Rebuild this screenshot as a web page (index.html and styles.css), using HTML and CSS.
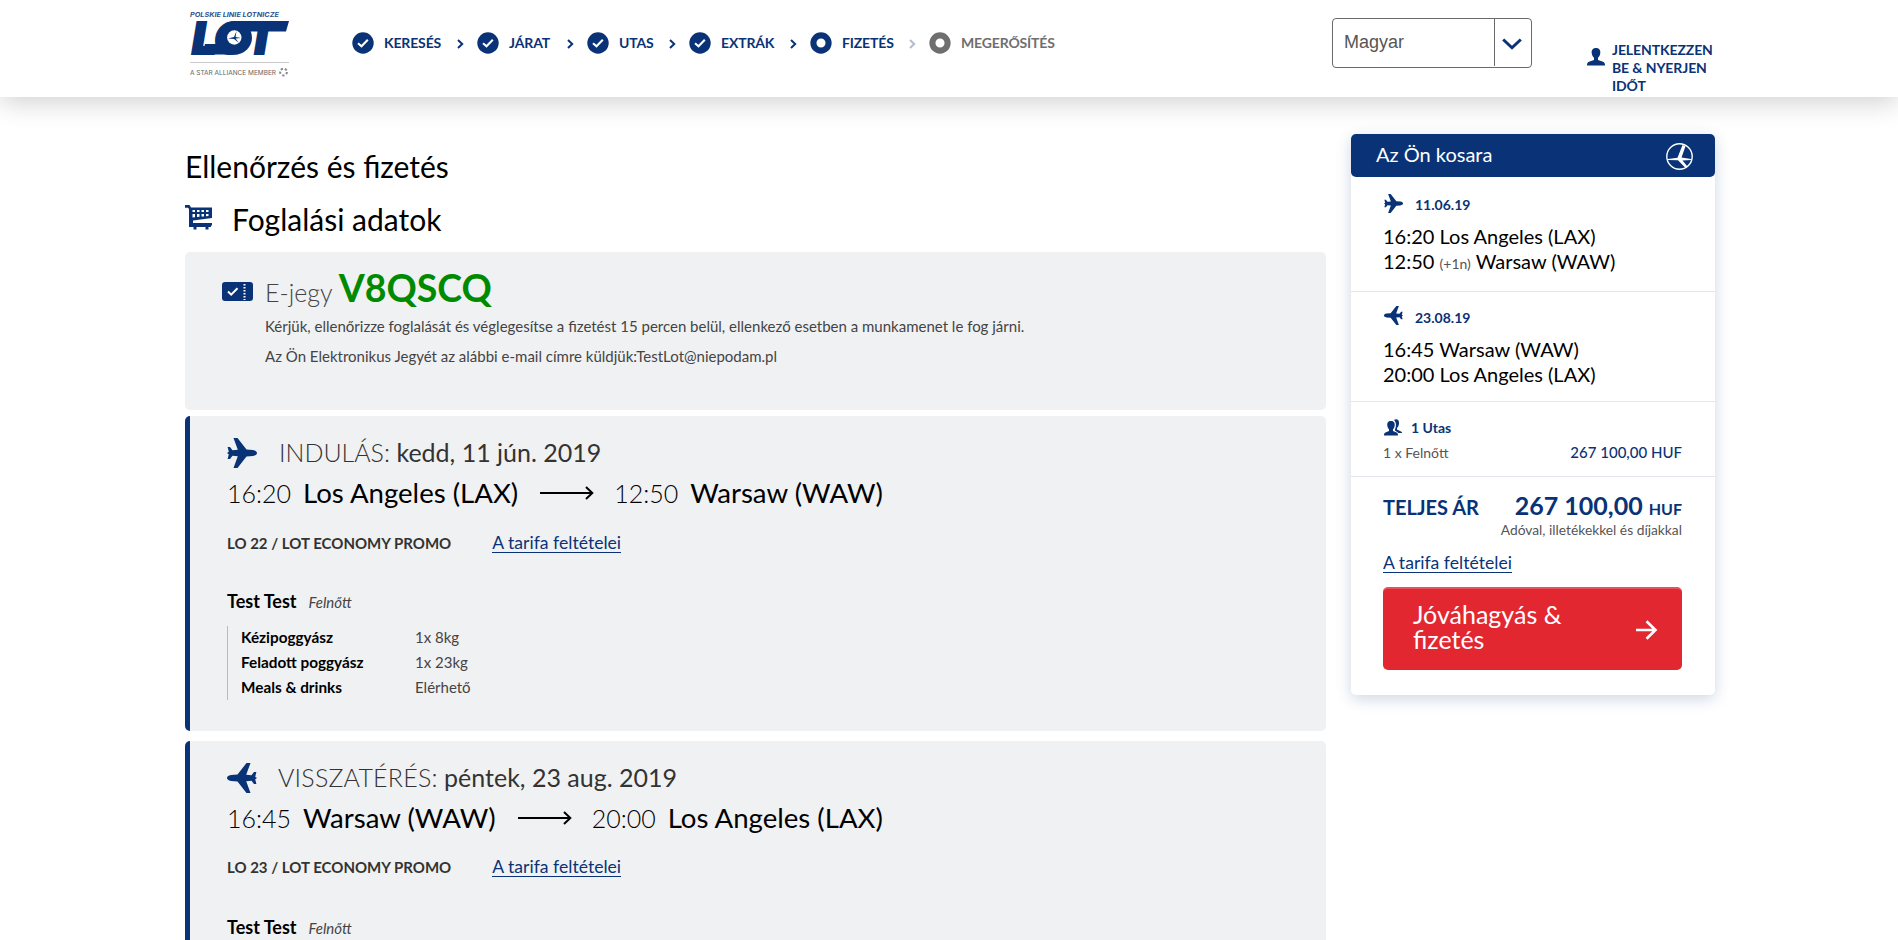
FILE: index.html
```html
<!DOCTYPE html>
<html lang="hu">
<head>
<meta charset="utf-8">
<title>LOT</title>
<link rel="stylesheet" href="styles.css">
</head>
<body>
<svg class="defs" width="0" height="0">
  <symbol id="plane" viewBox="0 0 30 30"><path d="M6.500 0H10.500L19.500 11.500L26 12C28.500 12.400 30 13.600 30 15C30 16.400 28.500 17.600 26 18L19.500 18.500L10.500 30H6.500L10.800 18.300L5.500 17.800L3 21H0.600L1.800 16.200L0 15L1.800 13.800L0.600 9H3L5.500 12.200L10.800 11.700Z"/></symbol>
  <symbol id="check" viewBox="0 0 22 22"><circle cx="11" cy="11" r="10.700"/><path d="M6 11.200L9.500 14.200L15.800 7.800" fill="none" stroke="#fff" stroke-width="2.100"/></symbol>
  <symbol id="ring" viewBox="0 0 22 22"><circle cx="11" cy="11" r="7.600" fill="none" stroke="currentColor" stroke-width="6.100"/></symbol>
  <symbol id="next" viewBox="0 0 7 10"><path d="M1 1L5.200 5L1 9" fill="none" stroke="currentColor" stroke-width="2"/></symbol>
  <symbol id="long" viewBox="0 0 54 14"><path d="M0 7H52M46 1L52.300 7L46 13" fill="none" stroke="#000" stroke-width="2"/></symbol>
</svg>
<header class="top">
  <a class="logo">
    <svg width="110" height="80" viewBox="183 0 110 80">
      <text x="190" y="17" class="logo-small" textLength="89" lengthAdjust="spacingAndGlyphs">POLSKIE LINIE LOTNICZE</text>
      <text y="53.500" x="192 214 246" class="logo-big">LOT</text>
      <path d="M236 21H289L286 31.500H240ZM205 44H226L238 54.400H202Z"/>
      <ellipse cx="235" cy="37.700" rx="17" ry="16.700"/>
      <circle cx="234.300" cy="37.500" r="7.200" class="white"/>
      <path d="M236.500 31L234 37L228 38.500L234 39L239 43L235.600 38.400L241 38L235.600 37Z"/>
      <path d="M190 62.500H289" stroke="#c9c9c9"/>
      <text x="190" y="74.500" class="logo-member" textLength="86" lengthAdjust="spacingAndGlyphs">A STAR ALLIANCE MEMBER</text>
      <circle cx="283.500" cy="72" r="3.400" class="star"/>
    </svg>
  </a>
  <nav class="steps">
    <span class="step"><svg class="dot"><use href="#check"/></svg><b class="w1">KERESÉS</b><svg class="next"><use href="#next"/></svg></span>
    <span class="step"><svg class="dot"><use href="#check"/></svg><b class="w2">JÁRAT</b><svg class="next"><use href="#next"/></svg></span>
    <span class="step"><svg class="dot"><use href="#check"/></svg><b class="w3">UTAS</b><svg class="next"><use href="#next"/></svg></span>
    <span class="step"><svg class="dot"><use href="#check"/></svg><b class="w4">EXTRÁK</b><svg class="next"><use href="#next"/></svg></span>
    <span class="step"><svg class="dot"><use href="#ring"/></svg><b class="w5">FIZETÉS</b><svg class="next faded"><use href="#next"/></svg></span>
    <span class="step idle"><svg class="dot"><use href="#ring"/></svg><b>MEGERŐSÍTÉS</b></span>
  </nav>
  <div class="lang"><span class="lang-name">Magyar</span><span class="lang-btn"><svg width="20" height="12" viewBox="0 0 20 12"><path d="M1.200 1.500L10 9.800L18.800 1.500" fill="none" stroke="#093376" stroke-width="3"/></svg></span></div>
  <a class="login"><svg width="18" height="18" viewBox="0 0 18 18"><path d="M9 0C12.200 0 13.600 2.200 13.300 5C13 7.500 12 9 11 9.800V12L16 13.800C17.600 14.500 18 15.600 18 17.400H0C0 15.600 .4 14.500 2 13.800L7 12V9.800C6 9 5 7.500 4.700 5C4.400 2.200 5.800 0 9 0Z"/></svg><span>JELENTKEZZEN<br>BE &amp; NYERJEN<br>IDŐT</span></a>
</header>
<div class="page">
  <main>
    <h1>Ellenőrzés és fizetés</h1>
    <h2><svg width="28" height="26" viewBox="0 0 28 26"><path fill-rule="evenodd" d="M0 0H4.500L6 2.500H27V13L8 15.500V18H27V20.500H26V22H23.500V24.500H20.500V22H11.500V24.500H8.500V22H4V4L3 2.800H0ZM7.500 5V7H10V5ZM12 5V7H14.500V5ZM16.500 5V7H19V5ZM21 5V7H23.500V5ZM7.500 9V12.500L10 12.200V9ZM12 9V12L14.500 11.700V9ZM16.500 9V11.600L19 11.400V9ZM21 9V11.200L23.500 11V9Z"/></svg><span>Foglalási adatok</span></h2>
    <section class="box ticket">
      <svg width="31" height="19" viewBox="0 0 31 19"><rect width="31" height="19" rx="3"/><path d="M6 9.500L9.200 12.600L15.500 6.300" fill="none" stroke="#fff" stroke-width="2"/><path d="M22.500 2V18" stroke="#fff" stroke-width="2" stroke-dasharray="1.500 1.500"/></svg>
      <div>
        <div class="pnr"><span>E-jegy</span><strong>V8QSCQ</strong></div>
        <p>Kérjük, ellenőrizze foglalását és véglegesítse a fizetést 15 percen belül, ellenkező esetben a munkamenet le fog járni.</p>
        <p>Az Ön Elektronikus Jegyét az alábbi e-mail címre küldjük:TestLot@niepodam.pl</p>
      </div>
    </section>
    <section class="box flight">
      <div class="when"><svg class="plane"><use href="#plane"/></svg><div><span class="thin out">INDULÁS:</span> <span class="date">kedd, 11 jún. 2019</span></div></div>
      <div class="route"><span class="time">16:20</span><span class="city">Los Angeles (LAX)</span><svg class="long"><use href="#long"/></svg><span class="time">12:50</span><span class="city">Warsaw (WAW)</span></div>
      <div class="fare"><b>LO 22 / LOT ECONOMY PROMO</b><a class="link">A tarifa feltételei</a></div>
      <div class="person"><b>Test Test</b><i>Felnőtt</i></div>
      <dl><dt>Kézipoggyász</dt><dd>1x 8kg</dd><dt>Feladott poggyász</dt><dd>1x 23kg</dd><dt>Meals &amp; drinks</dt><dd>Elérhető</dd></dl>
    </section>
    <section class="box flight back">
      <div class="when"><svg class="plane flip"><use href="#plane"/></svg><div><span class="thin home">VISSZATÉRÉS:</span> <span class="date">péntek, 23 aug. 2019</span></div></div>
      <div class="route"><span class="time">16:45</span><span class="city">Warsaw (WAW)</span><svg class="long"><use href="#long"/></svg><span class="time">20:00</span><span class="city">Los Angeles (LAX)</span></div>
      <div class="fare"><b>LO 23 / LOT ECONOMY PROMO</b><a class="link">A tarifa feltételei</a></div>
      <div class="person"><b>Test Test</b><i>Felnőtt</i></div>
    </section>
  </main>
  <aside class="cart">
    <div class="cart-head"><span>Az Ön kosara</span><svg width="27" height="27" viewBox="0 0 27 27"><circle cx="13.500" cy="13.500" r="12.700" fill="none" stroke="#fff" stroke-width="1.400"/><path d="M16.500 2L19.500 3.300L15.500 14.500L25 16V17L16.500 17.500L21.500 23.500L19.500 25L12 17.300L2 17V16L11.500 14.800Z" fill="#fff"/></svg></div>
    <div class="leg"><div class="leg-date"><svg><use href="#plane"/></svg><b>11.06.19</b></div><p>16:20 Los Angeles (LAX)</p><p>12:50 <small>(+1n)</small> Warsaw (WAW)</p></div>
    <div class="leg second"><div class="leg-date"><svg class="flip"><use href="#plane"/></svg><b>23.08.19</b></div><p>16:45 Warsaw (WAW)</p><p>20:00 Los Angeles (LAX)</p></div>
    <div class="pax"><div class="pax-head"><svg width="18" height="17" viewBox="0 0 18 17"><path d="M10 1C12 -.5 15.500 .3 15 4.500C14.800 6.500 14 8 13 9V10.500L17 12.500C18 13 18 13.500 18 14H14.500L11 11.500V10C12.300 8 12.500 3 10 1Z"/><path d="M7 2C10 2 11 4 10.700 6.500C10.500 8.500 9.800 9.500 9 10.300V12L12.500 13.500C13.800 14.200 14 15 14 16.500H0C0 15 .2 14.200 1.500 13.500L5 12V10.300C4.200 9.500 3.500 8.500 3.300 6.500C3 4 4 2 7 2Z"/></svg><b>1 Utas</b></div><div class="pax-row"><span>1 x Felnőtt</span><b>267 100,00 HUF</b></div></div>
    <div class="sum">
      <div class="total"><span class="label">TELJES ÁR</span><span class="amount">267 100,00 <small>HUF</small></span></div>
      <div class="tax">Adóval, illetékekkel és díjakkal</div>
      <a class="link">A tarifa feltételei</a>
      <button class="pay"><span>Jóváhagyás &amp;<br>fizetés</span><svg width="22" height="20" viewBox="0 0 22 20"><path d="M0 10H19M10.500 1.200L19.500 10L10.500 18.800" fill="none" stroke="#fff" stroke-width="2.600"/></svg></button>
    </div>
  </aside>
</div>
</body>
</html>
```
FILE: styles.css
```css
* { box-sizing: border-box; }
body { margin: 0; height: 940px; overflow: hidden; background: #fff; font-family: Lato, sans-serif; color: #000; }
svg { display: block; flex: none; fill: #093376; }
h1, h2, p, dl, dd { margin: 0; }
.defs { position: absolute; }
.flip { transform: scaleX(-1); }

.top { height: 97px; display: flex; align-items: flex-start; padding-left: 183px; background: #fff; box-shadow: 0 5px 25px rgba(0, 0, 0, .19); }
.logo { width: 169px; }
.logo-small { font: italic 700 6.500px Inter, sans-serif; fill: #2f5390; }
.logo-big { font: italic 900 44px Inter, sans-serif; stroke: #093376; stroke-width: 2; }
.logo-member { font: 400 6.200px Inter, sans-serif; fill: #666; }
.white { fill: #fff; }
.star { fill: none; stroke: #888; stroke-width: 2; stroke-dasharray: 2.300 1.950; }
.steps { display: flex; width: 980px; padding-top: 32px; color: #093376; }
.step { display: flex; align-items: center; height: 22px; }
.step b { font-size: 14px; letter-spacing: -.15px; line-height: 22px; white-space: nowrap; margin-left: 10px; }
.dot { width: 22px; height: 22px; }
.next { width: 7px; height: 10px; margin: 1px 13px 0 15px; }
.faded { color: #b4bccb; }
.idle { color: #6f6f6f; }
.w1 { width: 58px; } .w2 { width: 43px; } .w3 { width: 35px; } .w4 { width: 54px; } .w5 { width: 52px; }
.lang { display: flex; width: 200px; height: 50px; margin-top: 18px; border: 1px solid #6a6a6a; border-radius: 4px; font: 18px/46px "Liberation Sans", sans-serif; color: #555; }
.lang-name { flex: 1; padding-left: 11px; }
.lang-btn { width: 37px; height: 47px; border-left: 1px solid #6a6a6a; padding: 19px 0 0 7px; }
.login { display: flex; gap: 7px; margin: 41px 0 0 55px; color: #093376; font-size: 14px; font-weight: 700; line-height: 18px; letter-spacing: -.1px; }
.login svg { margin-top: 7px; }

.page { display: flex; align-items: flex-start; gap: 25px; height: 843px; padding-left: 185px; overflow: hidden; }
.top { position: relative; }
main { width: 1141px; }
h1, h2 { font-size: 30px; font-weight: 400; line-height: 36px; }
h1 { margin-top: 51px; }
h2 { display: flex; gap: 19px; margin: 17px 0 15px; }
h2 svg { margin-top: 4px; }
.box { background: #f0f1f3; border-radius: 5px; }
.ticket { height: 158px; display: flex; gap: 12px; padding: 13px 0 0 37px; color: #444; }
.ticket > svg { margin-top: 17px; }
.pnr { height: 46px; display: flex; align-items: baseline; gap: 6px; line-height: 46px; }
.pnr span { font-size: 25px; font-weight: 300; }
.pnr strong { font-size: 37.500px; color: #008a00; }
.ticket p { font-size: 15px; line-height: 30px; }
.flight { height: 315px; margin-top: 6px; border-left: 5px solid #093376; padding: 22px 0 0 37px; color: #333; }
.back { margin-top: 10px; }
.when { display: flex; gap: 21px; height: 30px; font-size: 25px; line-height: 29px; white-space: nowrap; }
.plane { width: 30px; height: 30px; }
.thin, .time { font-weight: 300; }
.out { padding-left: 1px; }
.home { letter-spacing: .2px; }
.route { display: flex; align-items: baseline; height: 36px; margin-top: 7px; line-height: 36px; color: #000; }
.time { font-size: 25px; width: 76px; }
.city { font-size: 27.600px; }
.long { width: 54px; height: 14px; margin: 0 20px 0 22px; align-self: center; }
.fare { display: flex; gap: 41px; margin-top: 19px; height: 26px; line-height: 26px; font-size: 15px; }
.link { display: block; width: max-content; height: 23px; border-bottom: 1px solid #093376; color: #093376; font-size: 17.600px; line-height: 25px; }
.person { display: flex; align-items: baseline; gap: 12px; margin-top: 32px; height: 26px; line-height: 26px; font-size: 18px; color: #000; }
.person i { font-size: 15px; color: #444; }
dl { display: grid; grid-template: 25px 24.500px 24.500px / 174px 1fr; width: 400px; height: 74px; margin-top: 12px; padding-left: 13px; border-left: 1px solid #b4bccb; font-size: 15px; line-height: 22.500px; color: #444; }
dt { font-weight: 700; font-size: 15.300px; color: #000; }
.back .when { line-height: 28px; }
.back .fare { margin-top: 18px; }
.back .person { margin-top: 34px; }

.cart { width: 364px; height: 561px; margin-top: 37px; border-radius: 5px; background: #fff; box-shadow: 0 4px 15px rgba(9, 51, 118, .2); }
.cart-head { height: 43px; display: flex; justify-content: space-between; padding: 0 22px 0 25px; border-radius: 5px; background: #093376; color: #fff; font-size: 20px; line-height: 41px; }
.cart-head svg { margin-top: 9px; }
.leg { height: 115px; padding: 16px 0 0 32px; border-bottom: 1px solid #e4e6ec; font-size: 20px; line-height: 25px; }
.second { height: 110px; padding-top: 13px; }
.leg-date { display: flex; gap: 12px; height: 31px; padding-left: 1px; }
.second .leg-date { height: 32px; }
.leg-date svg { width: 19px; height: 19px; margin-top: 1px; }
.leg-date b { font-size: 14px; line-height: 24px; color: #093376; }
.second b { line-height: 26px; }
.leg small { font-size: 14px; color: #555; }
.pax { height: 75px; padding: 17px 33px 0 32px; border-bottom: 1px solid #e4e6ec; color: #093376; }
.pax-head { display: flex; gap: 9px; font-size: 14px; line-height: 18px; height: 23px; padding-left: 1px; }
.pax-row { display: flex; justify-content: space-between; align-items: baseline; font-size: 15px; line-height: 20px; }
.pax-row span { font-size: 14px; color: #555; }
.pax-row b { font-weight: 500; }
.sum { padding: 13px 33px 0 32px; color: #093376; }
.total { display: flex; justify-content: space-between; align-items: baseline; height: 30px; line-height: 30px; font-size: 20px; font-weight: 700; }
.amount { font-size: 25px; }
.amount small { font-size: 16px; }
.tax { text-align: right; font-size: 13.800px; line-height: 20px; color: #555; }
.sum .link { margin-top: 10px; }
.pay { display: flex; justify-content: space-between; width: 299px; height: 83px; margin-top: 14px; padding: 13px 24px 0 30px; border: 0; border-top: 2px solid #e9525b; border-radius: 5px; background: #e32731; color: #fff; font: 25px/25px Lato, sans-serif; text-align: left; }
.pay svg { margin-top: 18px; }
```
